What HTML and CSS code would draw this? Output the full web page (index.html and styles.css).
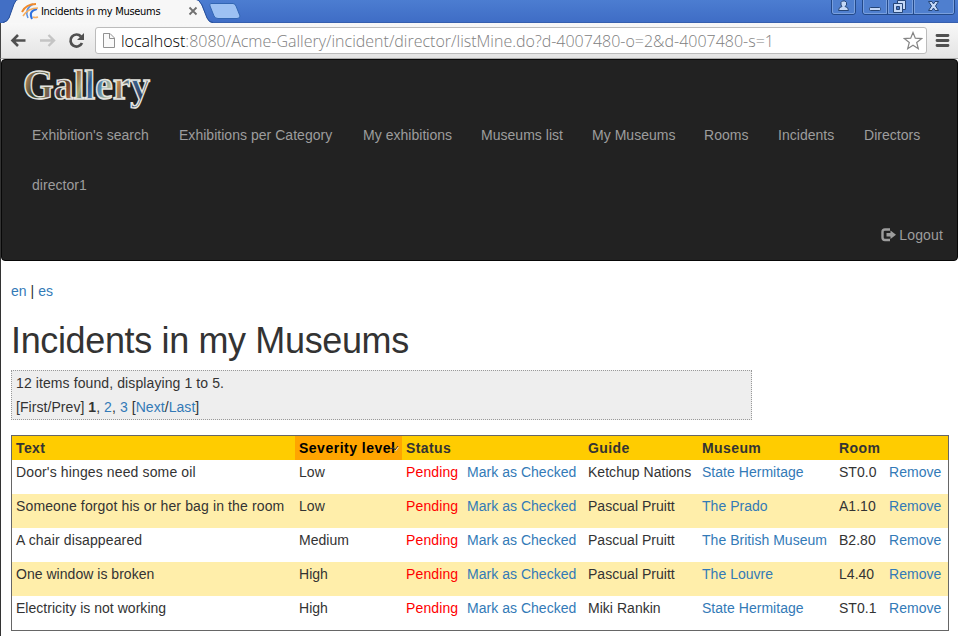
FILE: index.html
```html
<!DOCTYPE html>
<html lang="en">
<head>
<meta charset="utf-8">
<title>Incidents in my Museums</title>
<link rel="stylesheet" href="styles.css">
</head>
<body>
<header class="browser">
  <div class="titlebar">
    <svg class="tabs" width="250" height="23" viewBox="0 0 250 23">
      <path d="M0 23H3Q7 22 9 18L14 4Q16-1 19-1H194Q198-1 201 4L207 18Q209 23 213 23Z" fill="#f7f7f7"/>
      <path d="M0 0V22.500H3Q7 22 9 18L14 4Q16-1 19-1H0Z" fill="#426fc5"/>
      <path d="M3 22.500Q7 22 9 18L14 4Q16-1 19-1M195-1Q199-1 202 5L207 18Q209 22.500 213 22.500" fill="none" stroke="#274f9a"/>
      <path d="M211 3.500H233Q235 3.500 236 6L240 16Q240 18.500 237 18.500H218Q215 18.500 214 16L210 6Q209 4 211 3.500Z" fill="#9dc1f3" stroke="#3266b3"/>
      <g fill="none" stroke-width="1.500">
        <path d="M32 19Q28 11 37 9" stroke="#2e71df" stroke-width="2"/>
        <path d="M28 18Q24 9 33 4" stroke="#5b93e5"/>
        <path d="M22 12Q26 4 36 4" stroke="#f08a2c" stroke-width="2"/>
        <path d="M23 16Q28 8 38 8" stroke="#f4ad60"/>
        <path d="M33 17Q35 18 38 17" stroke="#f4ad60"/>
      </g>
      <path d="M189.500 7.500l7 7M196.500 7.500l-7 7" stroke="#707070" stroke-width="1.800"/>
    </svg>
    <span class="tab-title">Incidents in my Museums</span>
    <svg class="window-controls" width="128" height="16" viewBox="0 0 128 16">
      <g fill="#4f7fcf" stroke="#234989">
        <path d="M1.500-1V12Q1.500 14.500 4 14.500H23Q25.500 14.500 25.500 12V-1M32.500-1V12Q32.500 14.500 35 14.500H122Q124.500 14.500 124.500 12V-1M57.500 0V14M83.500 0V14"/>
      </g>
      <path d="M2.500-1V12Q3 13.500 4 13.500H23Q24.500 13.500 24.500 12V-1M33.500-1V12Q34 13.500 35 13.500H56.500V0M58.500 0V13.500H82.500V0M84.500 0V13.500H122Q123.500 13.500 123.500 12V0" fill="none" stroke="#799fdd"/>
      <g fill="#c4d8f7" stroke="#254577">
        <path d="M11 5V2.500L12.500 1H15L16.500 2.500V5L15 6.500Q18.500 7 18.500 10.500H8.500Q8.500 7 12 6.500Z"/>
        <rect x="39.500" y="7.500" width="11" height="3" rx="1"/>
        <path d="M67.500 .5H75.500V9.500H67.500Z"/>
        <path d="M63.500 3.500H72.500V12.500H63.500Z"/>
        <path d="M66.500 6.500H69.500V9.500H66.500Z" fill="#4774be"/>
        <path d="M98.500 1.500H102L103.500 4L105 1.500H108.500L105.500 6L108.500 10.500H105L103.500 8L102 10.500H98.500L101.500 6Z"/>
      </g>
    </svg>
  </div>
  <div class="toolbar">
    <svg class="nav-icons" width="95" height="36" viewBox="0 0 95 36">
      <path d="M25.500 17.500H13M18 12L12.500 17.500L18 23" fill="none" stroke="#505050" stroke-width="2.600"/>
      <path d="M40 17.500H52.500M48.500 12L54 17.500L48.500 23" fill="none" stroke="#c4c4c4" stroke-width="2.400"/>
      <path d="M81 13.500A6 6 0 1 0 82 20" fill="none" stroke="#505050" stroke-width="2.700"/>
      <path d="M84 10V17H77Z" fill="#505050"/>
    </svg>
    <div class="address">
      <svg class="page-icon" width="14" height="18" viewBox="0 0 14 18"><path d="M1.500 1.500H8L12.500 6V15.500H1.500Z" fill="#fafafa" stroke="#929292"/><path d="M7.500 1.500V6.500H12.500" fill="none" stroke="#929292"/></svg>
      <span class="url"><span class="host">localhost</span>:8080/Acme-Gallery/incident/director/listMine.do?d-4007480-o=2&amp;d-4007480-s=1</span>
      <svg class="star" width="20" height="20" viewBox="0 0 20 20"><path d="M10 1.500L12.300 7.200L18.500 7.600L13.700 11.500L15.300 17.700L10 14.200L4.700 17.700L6.300 11.500L1.500 7.600L7.700 7.200Z" fill="#fff" stroke="#858585" stroke-width="1.200"/></svg>
    </div>
    <svg class="menu-icon" width="15" height="15" viewBox="0 0 15 15"><path d="M2 2.500H13M2 7.500H13M2 12.500H13" stroke="#505050" stroke-width="2.800" stroke-linecap="round"/></svg>
  </div>
</header>
<div class="page">
  <nav class="navbar">
    <svg class="brand" width="160" height="50" viewBox="0 0 160 50">
      <defs>
        <linearGradient id="paint" x1="0" x2="1" y1="0" y2=".12">
          <stop offset="0" stop-color="#8a5736"/><stop offset=".08" stop-color="#a07850"/><stop offset=".16" stop-color="#304033"/><stop offset=".25" stop-color="#6d6a48"/><stop offset=".33" stop-color="#833963"/><stop offset=".36" stop-color="#343629"/><stop offset=".43" stop-color="#8c4a2d"/><stop offset=".51" stop-color="#a5aa78"/><stop offset=".57" stop-color="#2b5590"/><stop offset=".67" stop-color="#5c90b0"/><stop offset=".75" stop-color="#c2c294"/><stop offset=".8" stop-color="#b77b42"/><stop offset=".88" stop-color="#3d6b98"/><stop offset="1" stop-color="#314264"/>
        </linearGradient>
      </defs>
      <text class="logo-text" x="21" y="38" textLength="127" lengthAdjust="spacingAndGlyphs" fill="url(#paint)">Gallery</text>
    </svg>
    <ul class="links">
      <li>Exhibition's search</li><li>Exhibitions per Category</li><li>My exhibitions</li><li>Museums list</li><li>My Museums</li><li>Rooms</li><li>Incidents</li><li>Directors</li>
      <li>director1</li>
    </ul>
    <div class="logout">
      <svg width="15" height="14" viewBox="0 0 15 14"><path d="M9 1.500H4Q1.500 1.500 1.500 4V9.500Q1.500 12 4 12H9" fill="none" stroke="#9d9d9d" stroke-width="2.400"/><path d="M5.500 5H9.500V2.500L15 6.800L9.500 11V8.500H5.500Z" fill="#9d9d9d"/></svg>
      <span>Logout</span>
    </div>
  </nav>
  <main>
    <div class="langs"><a>en</a> | <a>es</a></div>
    <h1>Incidents in my Museums</h1>
    <div class="pager">
      <div>12 items found, displaying 1 to 5.</div>
      <div class="pages">[First/Prev] <strong>1</strong>, <a>2</a>, <a>3</a> [<a>Next</a>/<a>Last</a>]</div>
    </div>
    <table>
      <colgroup><col class="c-text"><col class="c-level"><col class="c-status"><col class="c-mark"><col class="c-guide"><col class="c-museum"><col class="c-room"><col class="c-remove"></colgroup>
      <thead><tr><th>Text</th><th class="sorted"><span>Severity level</span><svg class="sort" width="9" height="7" viewBox="0 0 9 7"><path d="M0 3.500H4M3 2L5 5L8 1" fill="none" stroke="#333"/><path d="M5.500 6L8.500 2" stroke="#dcdcdc"/></svg></th><th>Status</th><th></th><th>Guide</th><th>Museum</th><th>Room</th><th></th></tr></thead>
      <tbody>
        <tr><td class="wide">Door's hinges need some oil</td><td>Low</td><td class="pending">Pending</td><td><a>Mark as Checked</a></td><td>Ketchup Nations</td><td><a>State Hermitage</a></td><td>ST0.0</td><td><a>Remove</a></td></tr>
        <tr><td class="wide">Someone forgot his or her bag in the room</td><td>Low</td><td class="pending">Pending</td><td><a>Mark as Checked</a></td><td>Pascual Pruitt</td><td><a>The Prado</a></td><td>A1.10</td><td><a>Remove</a></td></tr>
        <tr><td class="wide">A chair disappeared</td><td>Medium</td><td class="pending">Pending</td><td><a>Mark as Checked</a></td><td>Pascual Pruitt</td><td><a>The British Museum</a></td><td>B2.80</td><td><a>Remove</a></td></tr>
        <tr><td>One window is broken</td><td>High</td><td class="pending">Pending</td><td><a>Mark as Checked</a></td><td>Pascual Pruitt</td><td><a>The Louvre</a></td><td>L4.40</td><td><a>Remove</a></td></tr>
        <tr><td>Electricity is not working</td><td>High</td><td class="pending">Pending</td><td><a>Mark as Checked</a></td><td>Miki Rankin</td><td><a>State Hermitage</a></td><td>ST0.1</td><td><a>Remove</a></td></tr>
      </tbody>
    </table>
  </main>
</div>
</body>
</html>
```
FILE: styles.css
```css
* { box-sizing: border-box; }
body {
  margin: 0;
  height: 636px;
  overflow: hidden;
  background: #fff;
  color: #333;
  font: 14px/20px "Liberation Sans", Arial, sans-serif;
  letter-spacing: .03px;
}
a { color: #337ab7; }
.titlebar {
  height: 23px;
  display: flex;
  position: relative;
  justify-content: space-between;
  background: linear-gradient(#4c7dd1, #3f6dc6);
  border-bottom: 1px solid #365fae;
}
.tabs { display: block; flex: none; }
.tab-title {
  position: absolute;
  left: 41px;
  top: 4px;
  color: #000;
  font: 11px/16px "DejaVu Sans Condensed", "DejaVu Sans", sans-serif;
  font-stretch: condensed;
  letter-spacing: -.3px;
  white-space: nowrap;
}
.window-controls { display: block; }
.toolbar {
  height: 36px;
  display: flex;
  align-items: center;
  background: linear-gradient(#f8f8f8, #e4e4e4);
  border-bottom: 1px solid #aaa;
  border-left: 1px solid #444;
}
.nav-icons { flex: none; margin-left: -1px; }
.address {
  width: 832px;
  height: 27px;
  display: flex;
  align-items: center;
  border: 1px solid #bcbcbc;
  border-radius: 3px;
  background: #fff;
}
.page-icon { flex: none; margin: 0 5px 0 6px; }
.url {
  flex: 1;
  color: #808080;
  font: 300 16px/24px "Open Sans", sans-serif;
  letter-spacing: 0;
  white-space: nowrap;
}
.host { color: #000; }
.star { flex: none; margin-right: 3px; }
.menu-icon { flex: none; margin-left: 8px; }
.page { height: 577px; border-left: 1px solid #333; }
.navbar {
  height: 202px;
  padding-top: 1px;
  background: #222;
  border: 1px solid #080808;
  border-radius: 4px;
  color: #9d9d9d;
}
.brand { display: block; overflow: visible; }
.logo-text {
  font: bold 43px "Liberation Serif", serif;
  letter-spacing: 0;
  stroke: #e4e4df;
  stroke-width: 1.5px;
}
.links {
  display: grid;
  grid-template-columns: 147px 184px 118px 111px 112px 74px 86px 80px;
  grid-auto-rows: 50px;
  margin: 0;
  padding: 0 0 0 30px;
  list-style: none;
  line-height: 48px;
  white-space: nowrap;
}
.logout {
  height: 48px;
  display: flex;
  align-items: center;
  justify-content: flex-end;
  gap: 3px;
  padding-right: 14px;
  letter-spacing: .15px;
}
main { padding: 20px 9px 0 10px; }
.langs { height: 20px; }
h1 {
  height: 40px;
  margin: 20px 0 9px;
  font-size: 36px;
  font-weight: 400;
  line-height: 39px;
  letter-spacing: -.36px;
}
.pager {
  width: 741px;
  height: 50px;
  padding: 2px 4px;
  background: #eee;
  border: 1px dotted #999;
  letter-spacing: .1px;
}
.pages { margin-top: 4px; letter-spacing: .06px; }
table {
  width: 938px;
  margin-top: 15px;
  table-layout: fixed;
  border-collapse: separate;
  border-spacing: 0;
  border: 1px solid #666;
  white-space: nowrap;
}
.c-text { width: 283px; }
.c-level { width: 107px; }
.c-status { width: 61px; }
.c-mark { width: 121px; }
.c-guide { width: 114px; }
.c-museum { width: 137px; }
.c-room { width: 50px; }
.c-remove { width: 63px; }
th, td { padding: 2px 4px; text-align: left; vertical-align: top; }
th { height: 24px; background: #fc0; letter-spacing: .4px; }
th.sorted { position: relative; background: orange; color: #000; letter-spacing: .5px; }
.sort { position: absolute; right: 3px; top: 9px; }
td { height: 34px; }
.wide { letter-spacing: .13px; }
tbody tr:nth-child(even) { background: #fea; }
.pending { color: red; letter-spacing: .13px; }
```
